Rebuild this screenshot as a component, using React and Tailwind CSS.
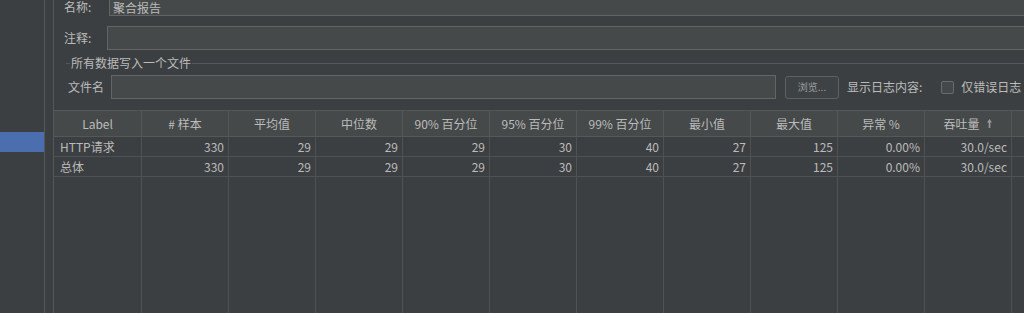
import React from 'react';

const columns = ['Label', '# 样本', '平均值', '中位数', '90% 百分位', '95% 百分位', '99% 百分位', '最小值', '最大值', '异常 %', '吞吐量'];

const rows = [
  ['HTTP请求', '330', '29', '29', '29', '30', '40', '27', '125', '0.00%', '30.0/sec'],
  ['总体', '330', '29', '29', '29', '30', '40', '27', '125', '0.00%', '30.0/sec'],
];

function SortArrow() {
  return (
    <svg width="7" height="11" viewBox="0 0 7 11" className="ml-[6px] inline-block">
      <path d="M3.5 1 L6 4.5 L4.3 4.5 L4.3 10 L2.7 10 L2.7 4.5 L1 4.5 Z" fill="#9a9a9a" />
    </svg>
  );
}

function App() {
  return (
    <div className="h-[313px] w-[1024px] overflow-hidden flex bg-[#3c3f41] text-[#bbbbbb] text-[12px] font-['Noto_Sans_CJK_SC','Noto_Sans',sans-serif]">
      {/* side tree */}
      <div className="w-[45px] shrink-0 border-r border-[#555759] pt-[132px]">
        <div className="h-[20px] w-[44px] bg-[#4b6eaf]"></div>
      </div>
      <div className="w-[8px] shrink-0"></div>

      <div className="flex-1 min-w-0 border-l border-[#555759] flex flex-col">
        <div className="pl-[10px] mt-[-8px]">
          <div className="flex h-[24px]">
            <span className="w-[45px] shrink-0 mt-[9px] h-[12px] leading-[12px]">名称:</span>
            <div className="flex-1 h-[24px] bg-[#45494a] border border-[#646464] pl-[3px] mr-[-4px] leading-[30px]">聚合报告</div>
          </div>
          <div className="flex items-center h-[24px] mt-[10px]">
            <span className="w-[43px] shrink-0">注释:</span>
            <div className="flex-1 h-[24px] bg-[#45494a] border border-[#646464] mr-[-4px]"></div>
          </div>
        </div>

        <div className="flex items-center h-[14px] mt-[6px] pl-[12px]">
          <div className="w-[4px] border-t border-[#555759]"></div>
          <span className="px-[1px] leading-[14px]">所有数据写入一个文件</span>
          <div className="flex-1 border-t border-[#555759]"></div>
        </div>

        <div className="flex items-center h-[24px] mt-[5px] pl-[14px]">
          <span className="w-[43px] shrink-0">文件名</span>
          <div className="w-[665px] shrink-0 h-[24px] bg-[#45494a] border border-[#646464]"></div>
          <button className="ml-[9px] w-[54px] h-[23px] rounded-[3px] border border-[#5e6062] bg-[#3f4244] text-[10px] text-[#9a9e9e] leading-none">浏览...</button>
          <span className="ml-[8px] whitespace-nowrap">显示日志内容:</span>
          <div className="ml-[19px] w-[13px] h-[13px] shrink-0 rounded-[2px] border border-[#6b6b6b] bg-[#43494a]"></div>
          <span className="ml-[7px] whitespace-nowrap">仅错误日志</span>
        </div>

        {/* table */}
        <div className="mt-[11px] flex-1 flex flex-col min-h-0">
          <div className="flex h-[27px] bg-[#45494a] border-t border-b border-[#555759]">
            {columns.map((c, i) => (
              <div
                key={c}
                className={
                  (i === 0 ? 'w-[88px] ' : 'w-[87px] ') +
                  'shrink-0 border-r border-[#555759] flex items-center justify-center whitespace-nowrap'
                }
              >
                {c}
                {c === '吞吐量' && <SortArrow />}
              </div>
            ))}
            <div className="flex-1"></div>
          </div>
          {rows.map((r) => (
            <div key={r[0]} className="flex h-[20px] border-b border-[#4f5254]">
              {r.map((v, i) => (
                <div
                  key={i}
                  className={
                    i === 0
                      ? 'w-[88px] shrink-0 border-r border-[#4f5254] px-[6px] flex items-center'
                      : 'w-[87px] shrink-0 border-r border-[#4f5254] px-[4px] flex items-center justify-end'
                  }
                >
                  {v}
                </div>
              ))}
              <div className="flex-1"></div>
            </div>
          ))}
          <div className="flex flex-1">
            {columns.map((c, i) => (
              <div
                key={c}
                className={(i === 0 ? 'w-[88px] ' : 'w-[87px] ') + 'shrink-0 border-r border-[#4f5254]'}
              ></div>
            ))}
            <div className="flex-1"></div>
          </div>
        </div>
      </div>
    </div>
  );
}

export default App;
